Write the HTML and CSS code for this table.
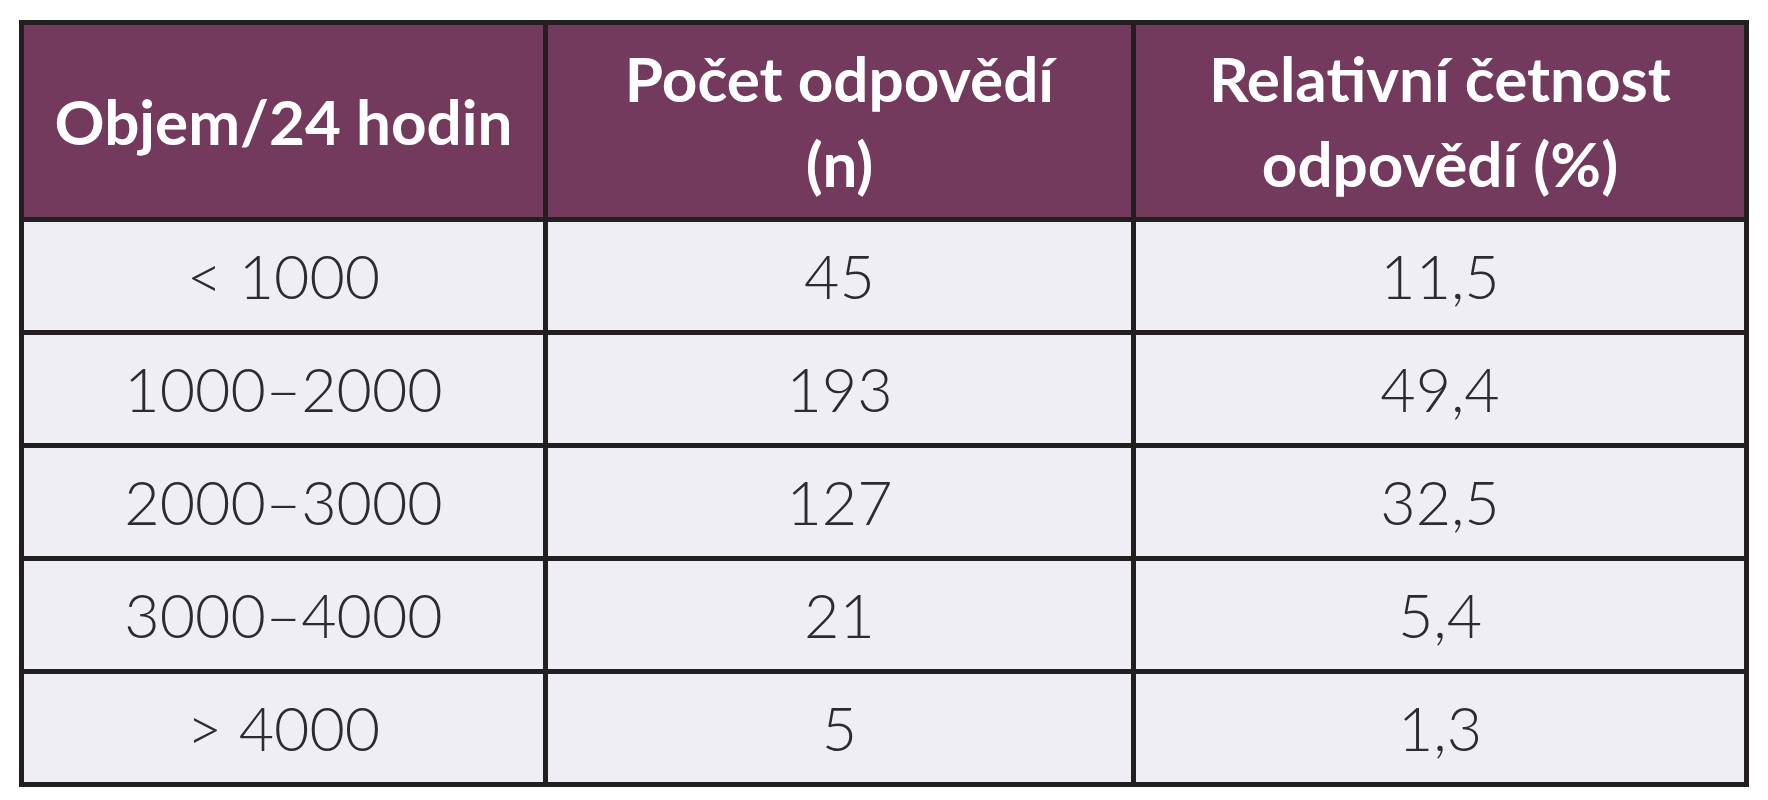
FILE: index.html
```html
<!DOCTYPE html>
<html lang="cs">
<head>
<meta charset="utf-8">
<title>Objem/24 hodin</title>
<link rel="stylesheet" href="styles.css">
</head>
<body>
<table class="data">
  <colgroup>
    <col class="c1">
    <col class="c2">
    <col class="c3">
  </colgroup>
  <thead>
    <tr class="head">
      <th>Objem/24 hodin</th>
      <th>Počet odpovědí<br>(n)</th>
      <th>Relativní četnost<br>odpovědí (%)</th>
    </tr>
  </thead>
  <tbody>
    <tr><td>&lt; 1000</td><td>45</td><td>11,5</td></tr>
    <tr><td>1000–2000</td><td>193</td><td>49,4</td></tr>
    <tr><td>2000–3000</td><td>127</td><td>32,5</td></tr>
    <tr><td>3000–4000</td><td>21</td><td>5,4</td></tr>
    <tr><td>&gt; 4000</td><td>5</td><td>1,3</td></tr>
  </tbody>
</table>
</body>
</html>
```
FILE: styles.css
```css
html, body {
  margin: 0;
  padding: 0;
  background: #ffffff;
}

body {
  padding: 20px 0 0 19px;
}

.data {
  border-collapse: collapse;
  table-layout: fixed;
  width: 1730px;
  font-family: Lato, "Open Sans", "Liberation Sans", sans-serif;
}

.c1 { width: 524px; }
.c2 { width: 588px; }
.c3 { width: 613px; }

.data th,
.data td {
  border: 5px solid #231f20;
  text-align: center;
  vertical-align: middle;
  padding: 0;
}

.data th {
  background: #733a5e;
  color: #ffffff;
  font-weight: 700;
  font-size: 62px;
  line-height: 85px;
  height: 192px;
}

.data td {
  background: #efeef5;
  color: #2e2b30;
  font-weight: 300;
  font-size: 61px;
  line-height: 70px;
  height: 108px;
}
```
